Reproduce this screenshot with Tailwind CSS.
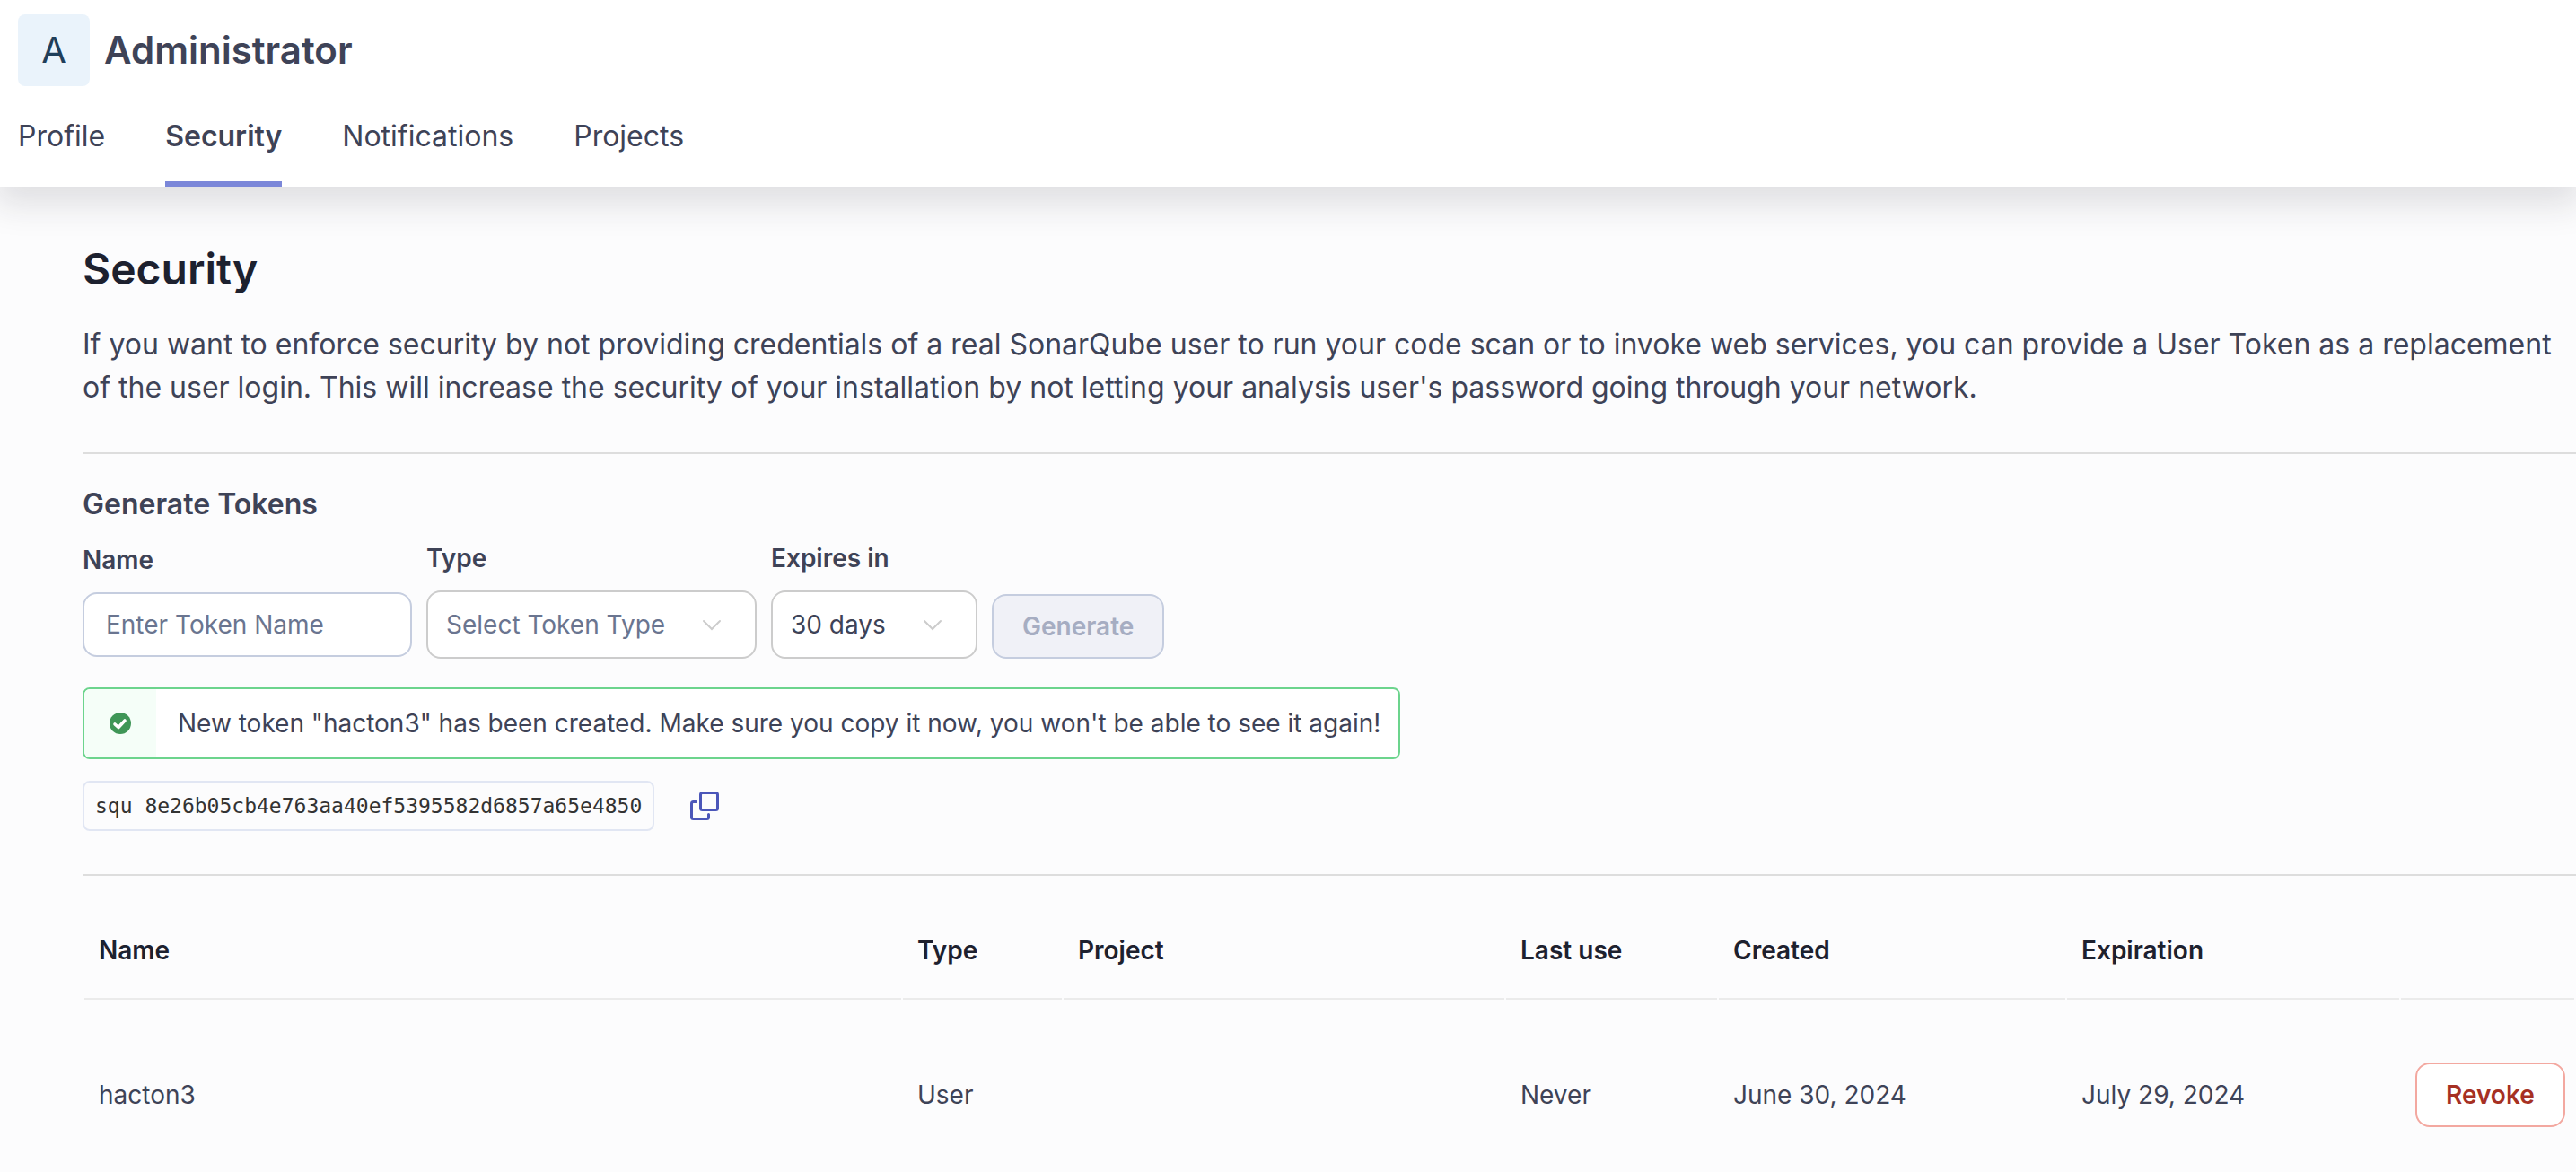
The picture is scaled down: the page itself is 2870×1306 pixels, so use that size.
<!DOCTYPE html>
<html lang="en">
<head>
<meta charset="utf-8">
<title>Security - Administrator</title>
<script src="https://cdn.jsdelivr.net/npm/@tailwindcss/browser@4"></script>
</head>
<body class="min-h-screen overflow-x-hidden bg-[#fcfcfd] font-[Inter,sans-serif] text-[28px] leading-10 text-[#3e4357]">
  <header class="relative bg-white px-5 pt-4 shadow-[0_14px_36px_6px_rgba(29,33,47,0.13)]">
    <div class="flex items-center gap-4">
      <div class="flex size-20 items-center justify-center rounded-lg bg-[#eaf3fb] text-[40px] text-[#1f3e5a]">A</div>
      <h1 class="text-[42px] leading-[48px] font-semibold">Administrator</h1>
    </div>
    <nav class="flex gap-[67px] text-[32px] leading-[48px]">
      <a href="#profile" class="border-b-6 border-transparent pt-8 pb-[26px]">Profile</a>
      <a href="#security" aria-current="page" class="border-b-6 border-[#7b87d9] pt-8 pb-[26px] font-semibold">Security</a>
      <a href="#notifications" class="border-b-6 border-transparent pt-8 pb-[26px]">Notifications</a>
      <a href="#projects" class="border-b-6 border-transparent pt-8 pb-[26px]">Projects</a>
    </nav>
  </header>

  <main class="pt-[60px] pl-[92px]">
    <h2 class="text-5xl leading-[64px] font-semibold text-[#1d212f]">Security</h2>
    <p class="mt-7 pr-5 text-[32px] leading-[48px]">If you want to enforce security by not providing credentials of a real SonarQube user to run your code scan or to invoke web services, you can provide a User Token as a replacement of the user login. This will increase the security of your installation by not letting your analysis user's password going through your network.</p>

    <hr class="mt-12 border-t-2 border-[#dddddd]">

    <h3 class="mt-9 text-[32px] leading-10 font-semibold">Generate Tokens</h3>
    <form class="mt-5 flex items-end gap-4">
      <div class="flex flex-col gap-4 pb-0.5">
        <label for="token-name" class="font-semibold">Name</label>
        <input id="token-name" type="text" placeholder="Enter Token Name" class="h-[72px] w-[367px] rounded-2xl border-2 border-[#c5cddf] bg-white px-6 placeholder:text-[#6a7590]">
      </div>
      <div class="flex flex-col gap-4">
        <label for="token-type" class="font-semibold">Type</label>
        <div class="relative">
          <select id="token-type" class="h-[76px] w-[368px] appearance-none rounded-2xl border-2 border-[#cccccc] bg-white px-5 text-[#6a7590]"><option>Select Token Type</option></select>
          <svg class="pointer-events-none absolute top-7 right-[38px] size-6" viewBox="0 0 24 24" fill="none" stroke="#cccccc" stroke-width="2" stroke-linecap="round" aria-hidden="true"><path d="M3 6l9 9 9-9"/></svg>
        </div>
      </div>
      <div class="flex flex-col gap-4">
        <label for="expires" class="font-semibold">Expires in</label>
        <div class="relative">
          <select id="expires" class="h-[76px] w-[230px] appearance-none rounded-2xl border-2 border-[#cccccc] bg-white px-5"><option>30 days</option></select>
          <svg class="pointer-events-none absolute top-7 right-[38px] size-6" viewBox="0 0 24 24" fill="none" stroke="#cccccc" stroke-width="2" stroke-linecap="round" aria-hidden="true"><path d="M3 6l9 9 9-9"/></svg>
        </div>
      </div>
      <button type="button" disabled class="h-[72px] rounded-2xl border-2 border-[#c5cddf] bg-[#f0f1f7] px-8 font-semibold text-[#a6adc2]">Generate</button>
    </form>

    <div role="status" class="mt-8 flex h-20 w-fit overflow-hidden rounded-lg border-2 border-[#6cd48d] bg-white">
      <div class="flex w-20 items-center justify-center bg-[#f5fef8]">
        <svg class="size-6" viewBox="0 0 24 24" aria-hidden="true"><circle cx="12" cy="12" r="12" fill="#3f9657"/><path d="M6 13l4 3.500L17 9" fill="none" stroke="#ffffff" stroke-width="3.600" stroke-linecap="round" stroke-linejoin="round"/></svg>
      </div>
      <p class="self-center pr-5 pl-6">New token "hacton3" has been created. Make sure you copy it now, you won't be able to see it again!</p>
    </div>

    <div class="mt-6 flex items-center gap-10">
      <code class="flex h-14 items-center rounded-lg border-2 border-[#e1e6f3] px-3 font-['DejaVu_Sans_Mono',monospace] text-[23px] leading-8 text-[#333333]">squ_8e26b05cb4e763aa40ef5395582d6857a65e4850</code>
      <button type="button" aria-label="Copy to clipboard">
        <svg class="size-8" viewBox="0 0 32 32" fill="none" stroke="#4b56b9" stroke-width="3" stroke-linecap="round" stroke-linejoin="round" aria-hidden="true"><rect x="11.500" y="1.500" width="19" height="19" rx="2"/><path d="M6.500 11.500h-3a2 2 0 0 0-2 2v15a2 2 0 0 0 2 2h15a2 2 0 0 0 2-2v-3"/></svg>
      </button>
    </div>

    <hr class="mt-12 border-t-2 border-[#dddddd]">

    <table class="mt-7 w-full table-fixed border-separate border-spacing-0.5 text-left">
      <colgroup>
        <col>
        <col class="w-[177px]">
        <col class="w-[491px]">
        <col class="w-[235px]">
        <col class="w-[386px]">
        <col class="w-[370px]">
        <col class="w-[193px]">
      </colgroup>
      <thead class="text-[#1d212f]">
        <tr class="h-[108px]">
          <th scope="col" class="border-b-2 border-[#ebebeb] px-4 font-semibold">Name</th>
          <th scope="col" class="border-b-2 border-[#ebebeb] px-4 font-semibold">Type</th>
          <th scope="col" class="border-b-2 border-[#ebebeb] px-4 font-semibold">Project</th>
          <th scope="col" class="border-b-2 border-[#ebebeb] px-4 font-semibold">Last use</th>
          <th scope="col" class="border-b-2 border-[#ebebeb] px-4 font-semibold">Created</th>
          <th scope="col" class="border-b-2 border-[#ebebeb] px-4 font-semibold">Expiration</th>
          <td class="border-b-2 border-[#ebebeb]"></td>
        </tr>
      </thead>
      <tbody>
        <tr>
          <td class="px-4 pt-[68px] pb-12">hacton3</td>
          <td class="px-4 pt-[68px] pb-12">User</td>
          <td class="px-4 pt-[68px] pb-12"></td>
          <td class="px-4 pt-[68px] pb-12">Never</td>
          <td class="px-4 pt-[68px] pb-12">June 30, 2024</td>
          <td class="px-4 pt-[68px] pb-12">July 29, 2024</td>
          <td class="pt-[68px] pb-12 pl-4"><button type="button" class="block h-[72px] rounded-2xl border-2 border-[#f3a8a0] bg-white px-8 font-semibold text-[#a63023]">Revoke</button></td>
        </tr>
      </tbody>
    </table>
  </main>
</body>
</html>
